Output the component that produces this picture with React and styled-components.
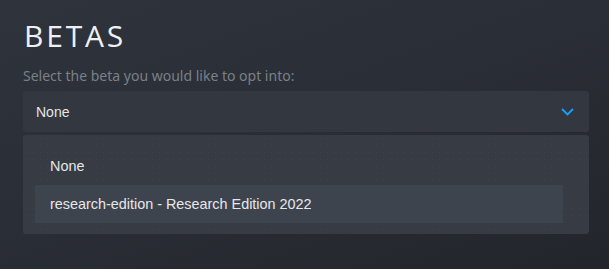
import styled, { createGlobalStyle } from "styled-components";

const GlobalStyle = createGlobalStyle`
	html, body {
		margin: 0;
		padding: 0;
		background: #23262d;
	}
`;

const Page = styled.div`
	width: 609px;
	height: 269px;
	box-sizing: border-box;
	padding: 18px 20px 0 23px;
	background: linear-gradient(160deg, #2f333b 0%, #2a2e36 45%, #22252c 100%);
	overflow: hidden;
`;

const Title = styled.h1`
	margin: 0 0 0 1px;
	font-family: "Open Sans", "Noto Sans", sans-serif;
	font-size: 30px;
	line-height: 36px;
	font-weight: 400;
	letter-spacing: 2.8px;
	color: #eef0f2;
`;

const Subtitle = styled.p`
	margin: 12px 0 5px;
	font-family: "Noto Sans", "Open Sans", sans-serif;
	font-size: 14px;
	line-height: 20px;
	color: #7a8088;
`;

const SelectBox = styled.div`
	height: 41px;
	box-sizing: border-box;
	display: flex;
	align-items: center;
	justify-content: space-between;
	padding: 0 15px 0 13px;
	background: #33373f;
	border-radius: 3px;
	font-family: "Liberation Sans", Arial, sans-serif;
	font-size: 14px;
	color: #e4e6e8;
`;

const Chevron = styled.svg`
	width: 13px;
	height: 8px;
	display: block;
`;

const Menu = styled.div`
	margin-top: 3px;
	padding: 12px 26px 11px 12px;
	background-color: #363b44;
	background-image: radial-gradient(rgba(255, 255, 255, 0.035) 0.8px, transparent 1px);
	background-size: 7px 7px;
	border-radius: 3px;
`;

const Option = styled.div`
	height: 38px;
	display: flex;
	align-items: center;
	padding-left: 15px;
	font-family: "Liberation Sans", Arial, sans-serif;
	font-size: 14.4px;
	color: #e6e8ea;
	background: ${(props) => (props.active ? "#3e444e" : "transparent")};
`;

const App = () => {
	return (
		<>
			<GlobalStyle />
			<Page>
				<Title>BETAS</Title>
				<Subtitle>Select the beta you would like to opt into:</Subtitle>
				<SelectBox>
					<span>None</span>
					<Chevron viewBox="0 0 13 8">
						<path d="M1 1 L6.5 6.5 L12 1" fill="none" stroke="#1a9fff" strokeWidth="1.8" />
					</Chevron>
				</SelectBox>
				<Menu>
					<Option>None</Option>
					<Option active>research-edition - Research Edition 2022</Option>
				</Menu>
			</Page>
		</>
	);
};

export default App;
